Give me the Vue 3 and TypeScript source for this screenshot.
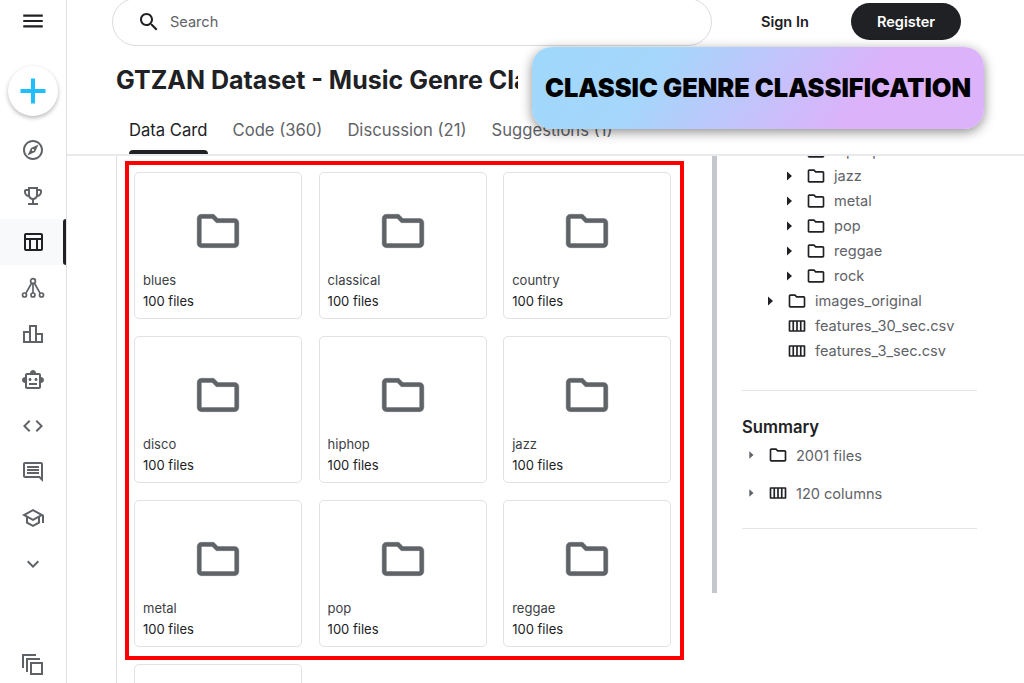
<script setup lang="ts">
const ic: Record<string, string> = {
  explore: 'M12 2C6.48 2 2 6.48 2 12s4.48 10 10 10 10-4.48 10-10S17.52 2 12 2zm0 18c-4.41 0-8-3.59-8-8s3.59-8 8-8 8 3.59 8 8-3.59 8-8 8zm-5.5-2.5l7.51-3.49L17.5 6.5 9.99 9.99 6.5 17.5zm5.5-6.6c.61 0 1.1.49 1.1 1.1s-.49 1.1-1.1 1.1-1.1-.49-1.1-1.1.49-1.1 1.1-1.1z',
  trophy: 'M19 5h-2V3H7v2H5c-1.1 0-2 .9-2 2v1c0 2.55 1.92 4.63 4.39 4.94.63 1.5 1.98 2.63 3.61 2.96V19H7v2h10v-2h-4v-3.1c1.63-.33 2.98-1.46 3.61-2.96C19.08 12.63 21 10.55 21 8V7c0-1.1-.9-2-2-2zM5 8V7h2v3.82C5.84 10.4 5 9.3 5 8zm7 6c-1.65 0-3-1.35-3-3V5h6v6c0 1.65-1.35 3-3 3zm7-6c0 1.3-.84 2.4-2 2.82V7h2v1z',
  table: 'M20 3H5C3.9 3 3 3.9 3 5v14c0 1.1.9 2 2 2h15c1.1 0 2-.9 2-2V5c0-1.1-.9-2-2-2zm0 2v3H5V5h15zm-5 14h-5v-9h5v9zM5 10h3v9H5v-9zm12 9v-9h3v9h-3z',
  bars: 'M16 11V3H8v6H2v12h20V11h-6zm-6-6h4v14h-4V5zm-6 6h4v8H4v-8zm16 8h-4v-6h4v6z',
  robot: 'M20 9V7c0-1.1-.9-2-2-2h-3c0-1.66-1.34-3-3-3S9 3.34 9 5H6c-1.1 0-2 .9-2 2v2c-1.66 0-3 1.34-3 3s1.34 3 3 3v4c0 1.1.9 2 2 2h12c1.1 0 2-.9 2-2v-4c1.66 0 3-1.34 3-3s-1.34-3-3-3zm-2 10H6V7h12v12zm-9-6c-.83 0-1.5-.67-1.5-1.5S8.17 10 9 10s1.5.67 1.5 1.5S9.83 13 9 13zm7.5-1.5c0 .83-.67 1.5-1.5 1.5s-1.5-.67-1.5-1.5.67-1.5 1.5-1.5 1.5.67 1.5 1.5zM8 15h8v2H8v-2z',
  code: 'M9.4 16.6L4.8 12l4.6-4.6L8 6l-6 6 6 6 1.4-1.4zm5.2 0l4.6-4.6-4.6-4.6L16 6l6 6-6 6-1.4-1.4z',
  comment: 'M20 17.17L18.83 16H4V4h16v13.17zM20 2H4c-1.1 0-2 .9-2 2v12c0 1.1.9 2 2 2h14l4 4V4c0-1.1-.9-2-2-2zM6 12h12v2H6zM6 9h12v2H6zM6 6h12v2H6z',
  school: 'M12 3L1 9l4 2.18v6L12 21l7-3.82v-6l2-1.09V17h2V9L12 3zm6.82 6L12 12.72 5.18 9 12 5.28 18.82 9zM17 15.99l-5 2.73-5-2.73v-3.72L12 15l5-2.73v3.72z',
  more: 'M16.59 8.59L12 13.17 7.41 8.59 6 10l6 6 6-6z',
  copy: 'M9 9h13v13H9V9zm2 2v9h9v-9h-9zM5 5h14v2H7v12H5V5zM1 1h14v2H3v12H1V1z',
}
const folder = 'M9.17 6l2 2H20v10H4V6h5.17M10 4H4c-1.1 0-1.99.9-1.99 2L2 18c0 1.1.9 2 2 2h16c1.1 0 2-.9 2-2V8c0-1.1-.9-2-2-2h-8l-2-2z'
const columns = 'M3 5h18c.6 0 1 .4 1 1v12c0 .6-.4 1-1 1H3c-.6 0-1-.4-1-1V6c0-.6.4-1 1-1zm1 2v10h2.500V7H4zm4.500 0v10H11V7H8.500zM13 7v10h2.500V7H13zm4.500 0v10H20V7h-2.500z'
const caret = 'M4 1.500 9 6 4 10.500z'

const navTop = ['explore', 'trophy', 'table', 'net', 'bars', 'robot', 'code', 'comment', 'school', 'more']
const tabs = ['Data Card', 'Code (360)', 'Discussion (21)', 'Suggestions (1)']
const genres = ['blues', 'classical', 'country', 'disco', 'hiphop', 'jazz', 'metal', 'pop', 'reggae']
const subFolders = ['hiphop', 'jazz', 'metal', 'pop', 'reggae', 'rock']
const csvFiles = ['features_30_sec.csv', 'features_3_sec.csv']
</script>

<template>
  <div class="page">
    <aside class="rail">
      <button class="menu" aria-label="Menu">
        <svg width="26" height="26" viewBox="0 0 24 24"><path d="M3 18h18v-2H3v2zm0-5h18v-2H3v2zm0-7v2h18V6H3z" fill="#202124" /></svg>
      </button>
      <div class="plus">
        <svg width="32" height="32" viewBox="0 0 32 32"><path d="M14 3.500h4V14h10.500v4H18v10.500h-4V18H3.500v-4H14z" fill="#20beff" /></svg>
      </div>
      <nav class="nav">
        <div v-for="n in navTop" :key="n" class="nav-item" :class="{ active: n === 'table' }">
          <svg v-if="n === 'net'" class="net" width="24" height="24" viewBox="0 0 24 24">
            <circle cx="12" cy="5" r="2.400" />
            <circle cx="3.500" cy="19" r="2" />
            <circle cx="12" cy="19" r="2" />
            <circle cx="20.500" cy="19" r="2" />
            <path d="M10.700 7 4.800 17.300M12 7.400V17M13.300 7l5.900 10.300" />
          </svg>
          <svg v-else width="24" height="24" viewBox="0 0 24 24"><path :d="ic[n]" fill-rule="evenodd" /></svg>
        </div>
      </nav>
      <div class="nav-item bottom">
        <svg width="24" height="24" viewBox="0 0 24 24"><path :d="ic.copy" fill-rule="evenodd" /></svg>
      </div>
    </aside>

    <main class="main">
      <header class="top">
        <div class="search">
          <svg width="24" height="24" viewBox="0 0 24 24"><path d="M15.500 14h-.79l-.28-.27C15.410 12.590 16 11.110 16 9.500 16 5.910 13.090 3 9.500 3S3 5.910 3 9.500 5.910 16 9.500 16c1.610 0 3.090-.59 4.230-1.570l.27.28v.79l5 4.990L20.490 19l-4.990-5zm-6 0C7.010 14 5 11.990 5 9.500S7.010 5 9.500 5 14 7.010 14 9.500 11.990 14 9.500 14z" fill="#202124" /></svg>
          <span>Search</span>
        </div>
        <span class="signin">Sign In</span>
        <span class="register">Register</span>
      </header>

      <h1 class="title">GTZAN Dataset - Music Genre Classification</h1>

      <div class="tabs">
        <span v-for="(t, i) in tabs" :key="t" class="tab" :class="{ on: i === 0 }">{{ t }}</span>
      </div>

      <div class="body">
        <section class="files">
          <div class="grid">
            <article v-for="g in genres" :key="g" class="card">
              <div class="card-icon">
                <svg width="50" height="50" viewBox="0 0 24 24"><path :d="folder" fill="#5f6368" stroke="#5f6368" stroke-width=".2" /></svg>
              </div>
              <div class="card-name">{{ g }}</div>
              <div class="card-count">100 files</div>
            </article>
            <article class="card">
              <div class="card-icon"></div>
            </article>
          </div>
          <div class="thumb"></div>
        </section>

        <section class="side">
          <ul class="tree">
            <li v-for="f in subFolders" :key="f" class="row lvl2">
              <svg class="caret" width="12" height="12" viewBox="0 0 12 12"><path :d="caret" /></svg>
              <svg class="ti" width="20" height="20" viewBox="0 0 24 24"><path :d="folder" /></svg>
              <span>{{ f }}</span>
            </li>
            <li class="row lvl1">
              <svg class="caret" width="12" height="12" viewBox="0 0 12 12"><path :d="caret" /></svg>
              <svg class="ti" width="20" height="20" viewBox="0 0 24 24"><path :d="folder" /></svg>
              <span>images_original</span>
            </li>
            <li v-for="c in csvFiles" :key="c" class="row lvl1 nocaret">
              <svg class="ti" width="20" height="20" viewBox="0 0 24 24"><path :d="columns" fill-rule="evenodd" /></svg>
              <span>{{ c }}</span>
            </li>
          </ul>
          <div class="summary">
            <h2>Summary</h2>
            <div class="sum-row">
              <svg class="caret grey" width="10" height="10" viewBox="0 0 12 12"><path :d="caret" /></svg>
              <svg class="ti" width="20" height="20" viewBox="0 0 24 24"><path :d="folder" /></svg>
              <span>2001 files</span>
            </div>
            <div class="sum-row">
              <svg class="caret grey" width="10" height="10" viewBox="0 0 12 12"><path :d="caret" /></svg>
              <svg class="ti" width="20" height="20" viewBox="0 0 24 24"><path :d="columns" fill-rule="evenodd" /></svg>
              <span>120 columns</span>
            </div>
          </div>
        </section>
      </div>
    </main>

    <div class="callout">CLASSIC GENRE CLASSIFICATION</div>
    <div class="redbox"></div>
  </div>
</template>

<style>
html, body { margin: 0; background: #fff; overflow: hidden; }
</style>

<style scoped>
* { box-sizing: border-box; }
.page {
  position: relative;
  display: flex;
  width: 1024px;
  height: 683px;
  overflow: hidden;
  font-family: Inter, "Liberation Sans", sans-serif;
  color: #202124;
  background: #fff;
}
.rail {
  flex: 0 0 67px;
  display: flex;
  flex-direction: column;
  align-items: stretch;
  border-right: 1px solid #dfe1e5;
}
.menu {
  align-self: center;
  margin: 8px 0 0;
  padding: 0;
  width: 26px;
  height: 26px;
  border: 0;
  background: none;
}
.plus {
  align-self: center;
  margin: 32px 0 0 0;
  width: 50px;
  height: 50px;
  border-radius: 50%;
  display: flex;
  align-items: center;
  justify-content: center;
  background: #fff;
  box-shadow: 0 2px 4px rgba(0, 0, 0, .28);
}
.nav { margin-top: 11px; display: flex; flex-direction: column; }
.nav-item {
  position: relative;
  height: 46px;
  display: flex;
  align-items: center;
  justify-content: center;
  padding-right: 1px;
  fill: #5f6368;
}
.nav-item.active { background: #f8f9fa; fill: #202124; }
.nav-item.active::after {
  content: "";
  position: absolute;
  right: 0;
  top: 0;
  width: 3px;
  height: 46px;
  border-radius: 3px 0 0 3px;
  background: #202124;
}
.nav-item.bottom { margin-top: auto; margin-bottom: -5px; }
.net { fill: none; stroke: #5f6368; stroke-width: 1.700; }

.main { flex: 1; min-width: 0; display: flex; flex-direction: column; }
.top {
  display: flex;
  align-items: flex-start;
  height: 44px;
  margin-left: 45px;
}
.search {
  flex: 0 0 600px;
  height: 48px;
  margin-top: -2px;
  border: 1px solid #dadce0;
  border-radius: 24px;
  display: flex;
  align-items: center;
  gap: 9px;
  padding-left: 24px;
  font-size: 14.560px;
  color: #5f6368;
}
.signin {
  margin: 13px 0 0 49px;
  width: 50px;
  font-size: 14.560px;
  line-height: 18px;
  font-weight: 600;
  white-space: nowrap;
}
.register {
  margin: 3px 0 0 40px;
  width: 110px;
  height: 37px;
  border-radius: 19px;
  background: #202124;
  color: #fff;
  font-size: 14.560px;
  font-weight: 600;
  display: flex;
  align-items: center;
  justify-content: center;
}
.title {
  margin: 20px 0 0 49px;
  width: 402px;
  height: 32px;
  overflow: hidden;
  white-space: nowrap;
  font-size: 25px;
  line-height: 32px;
  font-weight: 700;
}
.tabs {
  display: flex;
  gap: 25px;
  height: 60px;
  padding: 22px 0 0 62px;
  border-bottom: 2px solid #e8eaed;
  font-size: 16.640px;
  line-height: 24px;
  color: #5f6368;
}
.tab { position: relative; white-space: nowrap; height: 36px; }
.tab.on { color: #202124; }
.tab.on::after {
  content: "";
  position: absolute;
  left: 0;
  right: 0;
  bottom: 0;
  height: 4px;
  border-radius: 4px 4px 0 0;
  background: #202124;
}

.body { flex: 1; min-height: 0; display: flex; overflow: hidden; }
.files {
  position: relative;
  flex: 0 0 602px;
  margin-left: 49px;
  border-left: 1px solid #e0e0e0;
  padding: 16px 0 0 17px;
  overflow: hidden;
}
.grid {
  display: grid;
  grid-template-columns: repeat(3, 168px);
  grid-auto-rows: 147px;
  column-gap: 16.600px;
  row-gap: 17px;
}
.card {
  border: 1px solid #e0e2e6;
  border-radius: 5px;
  padding: 0 8px;
  font-size: 13px;
  line-height: 21px;
}
.card-icon { height: 97px; display: flex; align-items: flex-end; justify-content: center; padding-bottom: 14px; }
.card-name { color: #3c4043; }
.card-count { color: #202124; }
.thumb {
  position: absolute;
  right: 1px;
  top: 0;
  width: 5px;
  height: 437px;
  background: #c4c7cc;
}

.side { flex: 1; min-width: 0; padding-left: 24px; overflow: hidden; }
.tree { margin: -18px 0 0; padding: 0 0 27px; list-style: none; width: 235px; border-bottom: 1px solid #e3e4e8; }
.row {
  display: flex;
  align-items: center;
  height: 25px;
  font-size: 14.560px;
  color: #5f6368;
  white-space: nowrap;
}
.lvl2 { padding-left: 41px; }
.lvl1 { padding-left: 22px; }
.lvl1.nocaret { padding-left: 45px; }
.caret { fill: #202124; flex: none; margin-right: 11px; }
.caret.grey { fill: #5f6368; margin: 0 12px 3px 4px; }
.ti { fill: #202124; flex: none; margin-right: 8px; }
.summary { width: 235px; padding: 26px 0 15px; border-bottom: 1px solid #e3e4e8; }
.summary h2 { margin: 0; font-size: 16.640px; line-height: 20px; font-weight: 600; }
.sum-row {
  display: flex;
  align-items: center;
  height: 38px;
  font-size: 14.560px;
  color: #5f6368;
}
.sum-row .ti { margin-bottom: 3px; }
.callout {
  position: absolute;
  left: 532px;
  top: 47px;
  width: 452px;
  height: 82px;
  padding-bottom: 1px;
  border-radius: 20px;
  background: linear-gradient(125deg, #9fd8fb 0%, #a6d6fb 28%, #dcb2fb 72%, #dcb2fb 100%);
  box-shadow: 0 3px 12px rgba(0, 0, 0, .45);
  display: flex;
  align-items: center;
  justify-content: center;
  color: #000;
  font-size: 25.400px;
  font-weight: 900;
  white-space: nowrap;
}
.redbox {
  position: absolute;
  left: 125px;
  top: 161px;
  width: 559px;
  height: 499px;
  border: 4px solid #f00;
  pointer-events: none;
}
</style>
